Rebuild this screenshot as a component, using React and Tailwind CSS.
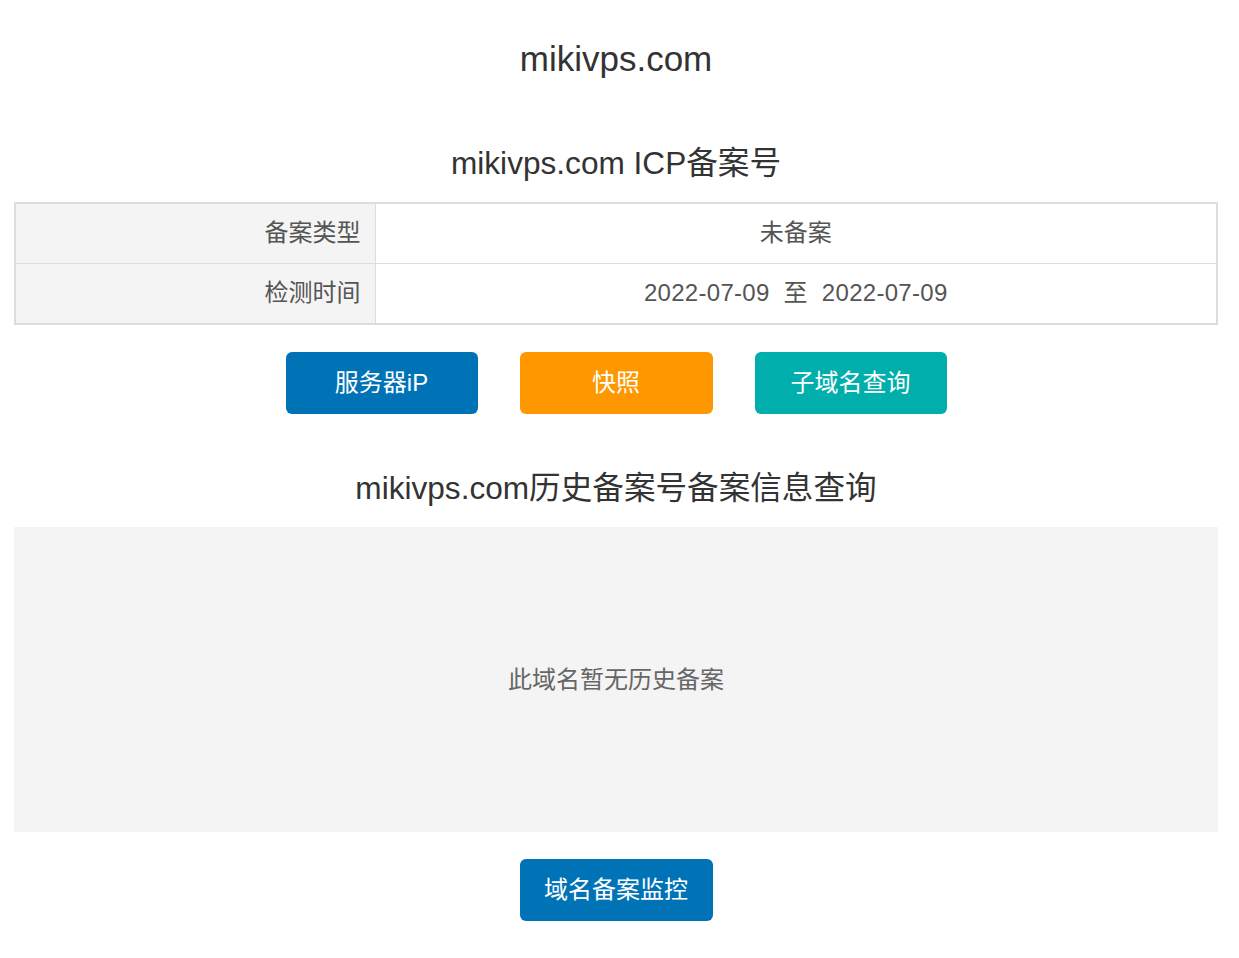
export default function App() {
  const font = { fontFamily: '"Liberation Sans", "Noto Sans CJK SC", sans-serif' };
  return (
    <div className="min-h-screen bg-white text-[#333]" style={font}>
      <div className="w-[1204px] ml-[14px] flex flex-col items-center">
        {/* Title */}
        <h1 className="mt-[39px] h-[40px] text-[35px] leading-[40px] text-center">mikivps.com</h1>

        <h2 className="mt-[64px] h-[40px] text-[31.6px] leading-[40px] text-center">mikivps.com ICP备案号</h2>

        {/* ICP table */}
        <table className="mt-[19px] w-full border-collapse border-2 border-[#ddd] text-[24px] text-[#555]">
          <tbody>
            <tr className="h-[60px]">
              <td className="w-[360px] bg-[#f4f4f4] text-right pr-[14px] border border-[#ddd]">备案类型</td>
              <td className="text-center border border-[#ddd]">未备案</td>
            </tr>
            <tr className="h-[61px]">
              <td className="w-[360px] bg-[#f4f4f4] text-right pr-[14px] border border-[#ddd]">检测时间</td>
              <td className="text-center border border-[#ddd] tracking-[0.3px]">2022-07-09{'\u00a0\u00a0'}至{'\u00a0\u00a0'}2022-07-09</td>
            </tr>
          </tbody>
        </table>

        {/* Buttons */}
        <div className="mt-[27px] flex gap-[42px]">
          <button className="w-[192px] h-[62px] rounded-[6px] bg-[#0073b7] text-white text-[24px]">服务器iP</button>
          <button className="w-[193px] h-[62px] rounded-[6px] bg-[#ff9800] text-white text-[24px]">快照</button>
          <button className="w-[192px] h-[62px] rounded-[6px] bg-[#00aeac] text-white text-[24px]">子域名查询</button>
        </div>

        <h2 className="mt-[54px] h-[40px] text-[31.6px] leading-[40px] text-center">mikivps.com历史备案号备案信息查询</h2>

        {/* History box */}
        <div className="mt-[19px] w-full h-[305px] bg-[#f4f4f4] flex items-center justify-center text-[24px] text-[#666]">
          此域名暂无历史备案
        </div>

        <button className="mt-[27px] w-[193px] h-[62px] rounded-[6px] bg-[#0073b7] text-white text-[24px]">域名备案监控</button>
      </div>
    </div>
  );
}
